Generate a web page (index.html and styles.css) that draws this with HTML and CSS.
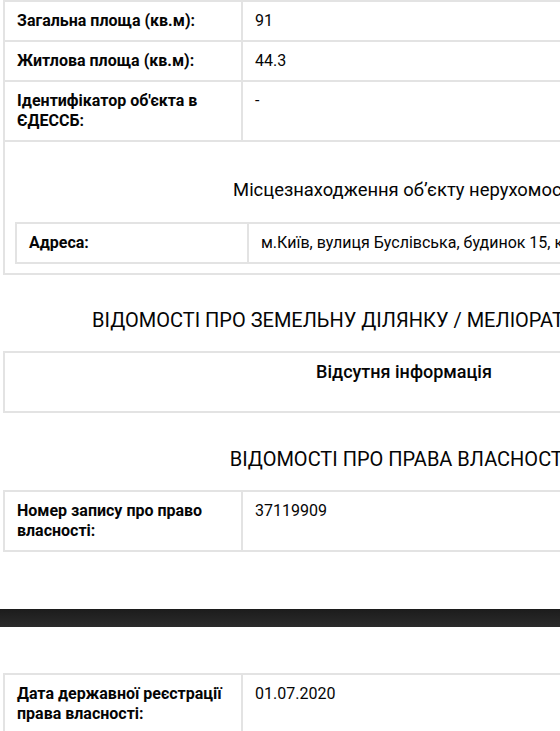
FILE: index.html
```html
<!DOCTYPE html>
<html lang="uk">
<head>
<meta charset="utf-8">
<link rel="stylesheet" href="styles.css">
</head>
<body>
<div class="page">
  <table class="grid">
    <tr><th>Загальна площа (кв.м):</th><td>91</td></tr>
    <tr><th>Житлова площа (кв.м):</th><td>44.3</td></tr>
    <tr><th>Ідентифікатор об'єкта в ЄДЕССБ:</th><td>-</td></tr>
    <tr>
      <td colspan="2" class="loc">
        <div class="loc-title">Місцезнаходження об’єкту нерухомості</div>
        <table class="grid nested">
          <tr><th>Адреса:</th><td>м.Київ, вулиця Буслівська, будинок 15, квартира 2</td></tr>
        </table>
      </td>
    </tr>
  </table>

  <h2 class="section">ВІДОМОСТІ ПРО ЗЕМЕЛЬНУ ДІЛЯНКУ / МЕЛІОРАТИВНУ МЕРЕЖУ</h2>
  <div class="empty">Відсутня інформація</div>

  <h2 class="section">ВІДОМОСТІ ПРО ПРАВА ВЛАСНОСТІ</h2>
  <table class="grid">
    <tr><th>Номер запису про право власності:</th><td>37119909</td></tr>
  </table>

  <div class="pagebreak"></div>

  <table class="grid last">
    <tr><th>Дата державної реєстрації права власності:</th><td>01.07.2020</td></tr>
  </table>
</div>
</body>
</html>
```

FILE: styles.css
```css
html, body {
  margin: 0;
  padding: 0;
  background: #fff;
  overflow: hidden;
}
body {
  font-family: Roboto, "Liberation Sans", Arial, sans-serif;
  color: #050505;
}
.page {
  width: 802px;
  margin-left: 3px;
}
.grid {
  width: 100%;
  border-collapse: collapse;
  table-layout: fixed;
}
.grid th, .grid td {
  border: 2px solid #e3e3e3;
  padding: 9px 12px;
  font-size: 16px;
  line-height: 20px;
  text-align: left;
  vertical-align: top;
}
.grid th {
  width: 212px;
  font-weight: 700;
}
.grid td {
  font-weight: 400;
}
.grid td.loc {
  padding: 38px 10px 9px 10px;
}
.loc-title {
  text-align: center;
  font-size: 18.4px;
  line-height: 20px;
  margin-bottom: 22px;
}
.grid.nested th {
  width: 206px;
}
.section {
  margin: 33px 0 19px;
  padding-right: 10px;
  font-size: 20px;
  line-height: 24px;
  font-weight: 400;
  text-align: center;
}
.empty {
  border: 2px solid #e3e3e3;
  padding: 9px 12px 29px;
  font-size: 18px;
  line-height: 20px;
  font-weight: 500;
  text-align: center;
  margin-bottom: 34px;
}
.empty + .section {
  margin-top: 0;
}
.pagebreak {
  width: 100vw;
  margin-left: -3px;
  height: 18px;
  margin-top: 57px;
  background: linear-gradient(#1c1c1c, #2b2b2b);
}
.grid.last {
  margin-top: 46px;
}
```
